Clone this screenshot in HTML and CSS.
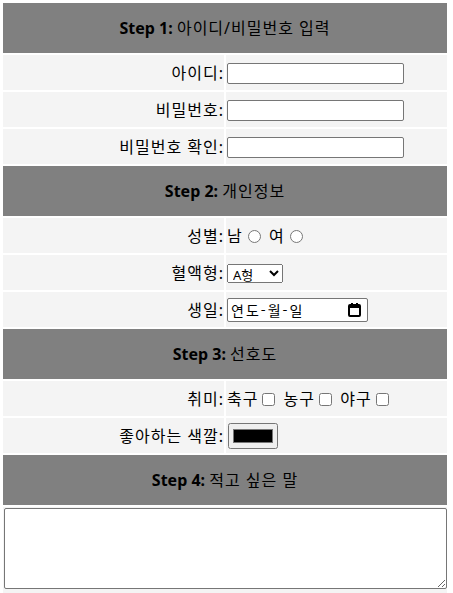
FILE: index.html
```html
<!DOCTYPE html>
<html lang="ko">
<head>
<meta charset="utf-8">
<title>회원가입</title>
<link rel="stylesheet" href="styles.css">
</head>
<body>
<form class="signup">
<table class="form-table">
  <tr><th colspan="2" class="step"><b>Step 1:</b> <span class="ko">아이디/비밀번호 입력</span></th></tr>
  <tr><td class="label">아이디:</td><td class="value"><input type="text" class="text-input"></td></tr>
  <tr><td class="label">비밀번호:</td><td class="value"><input type="password" class="text-input"></td></tr>
  <tr><td class="label">비밀번호 확인:</td><td class="value"><input type="password" class="text-input"></td></tr>
  <tr><th colspan="2" class="step"><b>Step 2:</b> <span class="ko">개인정보</span></th></tr>
  <tr><td class="label">성별:</td><td class="value">남<input type="radio" name="gender"> 여<input type="radio" name="gender"></td></tr>
  <tr><td class="label">혈액형:</td><td class="value"><select class="blood"><option>A형</option><option>B형</option><option>O형</option><option>AB형</option></select></td></tr>
  <tr><td class="label">생일:</td><td class="value"><span class="date-field"><span class="date-text">연도-월-일</span><svg class="cal" width="13" height="14" viewBox="0 0 13 14"><rect x="1" y="2" width="11" height="11" rx="1" fill="none" stroke="#000" stroke-width="2"/><rect x="1" y="2" width="11" height="3" fill="#000"/><rect x="3" y="0" width="2" height="3" fill="#000"/><rect x="8" y="0" width="2" height="3" fill="#000"/></svg></span></td></tr>
  <tr><th colspan="2" class="step"><b>Step 3:</b> <span class="ko">선호도</span></th></tr>
  <tr><td class="label">취미:</td><td class="value">축구<input type="checkbox"> 농구<input type="checkbox"> 야구<input type="checkbox"></td></tr>
  <tr><td class="label">좋아하는 색깔:</td><td class="value"><input type="color" class="color-input" value="#000000"></td></tr>
  <tr><th colspan="2" class="step"><b>Step 4:</b> <span class="ko">적고 싶은 말</span></th></tr>
  <tr><td colspan="2" class="memo-cell"><textarea class="memo"></textarea></td></tr>
</table>
</form>
</body>
</html>
```
FILE: styles.css
```css
body {
  margin: 1px;
  font-family: "Noto Sans", "Noto Sans CJK KR", sans-serif;
  font-size: 16px;
  color: #000;
}
.signup { margin: 0; }
.form-table {
  width: 448px;
  border-spacing: 2px;
  table-layout: fixed;
}
.step {
  background: #808080;
  height: 48px;
  padding: 1px;
  font-weight: normal;
  text-align: center;
  line-height: 20px;
}
.step b { font-weight: bold; }
.step .ko { letter-spacing: 1px; }
.label, .value {
  background: #f4f4f4;
  height: 33px;
  padding: 1px;
  line-height: 20px;
  vertical-align: middle;
  letter-spacing: 1px;
}
.label { text-align: right; padding-right: 0; }
.value { text-align: left; }
.text-input {
  box-sizing: border-box;
  width: 177px;
  height: 21px;
  margin: 0;
  vertical-align: middle;
  border: 1px solid #767676;
  border-radius: 2px;
}
.blood {
  box-sizing: border-box;
  width: 56px;
  height: 19px;
  margin: 0;
  padding: 0 0 0 1px;
  font-family: "Noto Sans", "Noto Sans CJK KR", sans-serif;
  font-size: 13px;
  line-height: 15px;
  letter-spacing: 0;
  vertical-align: middle;
}
.date-field {
  box-sizing: border-box;
  display: inline-flex;
  align-items: center;
  justify-content: space-between;
  width: 141px;
  height: 24px;
  padding: 0 6px 0 3px;
  border: 1px solid #767676;
  border-radius: 2px;
  background: #fff;
  vertical-align: middle;
  font-family: "Noto Sans CJK KR", sans-serif;
  font-size: 14px;
  letter-spacing: 2px;
  line-height: 20px;
}
.cal { display: block; }
.color-input {
  box-sizing: border-box;
  width: 50px;
  height: 26px;
  margin: 0 0 0 1px;
  vertical-align: middle;
}
.memo-cell {
  background: #f4f4f4;
  padding: 1px;
}
.memo {
  box-sizing: border-box;
  width: 443px;
  height: 81px;
  margin: 0;
  border: 1px solid #767676;
  border-radius: 2px;
}
input[type="radio"], input[type="checkbox"] {
  vertical-align: -1px;
}
```
